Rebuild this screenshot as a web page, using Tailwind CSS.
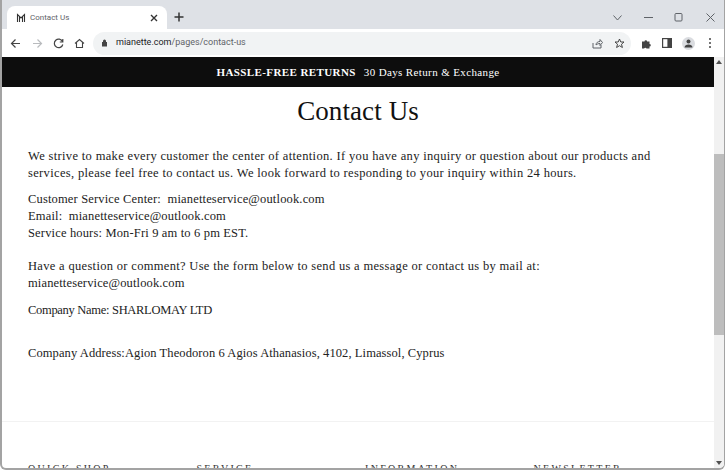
<!DOCTYPE html>
<html lang="en">
<head>
    <meta charset="UTF-8">
    <meta name="viewport" content="width=device-width, initial-scale=1.0">
    <title>Contact Us</title>
    <script src="https://cdn.jsdelivr.net/npm/@tailwindcss/browser@4"></script>
</head>
<body class="h-[470px] w-[725px] overflow-hidden bg-white font-['Liberation_Serif',serif]">
<div class="flex h-[470px] flex-col overflow-hidden rounded-b-md border-b-2 border-l-2 border-r border-[#a3a3a3]">

    <!-- tab strip -->
    <div class="flex h-[29px] shrink-0 items-end bg-[#dee1e6] pl-[5px] font-['Roboto',sans-serif]">
        <div class="flex h-[23px] w-[160px] items-center rounded-t-lg bg-white pl-[9px] pr-[9px]">
            <svg class="h-[10px] w-[10px] text-[#333]" viewBox="0 0 10 10" fill="none" stroke="currentColor" stroke-width="1.1"><path d="M1.5 9V1.5L5 5 8.5 1.5V9M3.5 9V4M6.5 9V4"/></svg>
            <span class="ml-[4px] text-[8px] text-[#5f6368]">Contact Us</span>
            <svg class="ml-auto h-[8px] w-[8px] text-[#333]" viewBox="0 0 8 8" stroke="currentColor" stroke-width="1.4"><path d="M1 1l6 6M7 1L1 7"/></svg>
        </div>
        <svg class="mb-[7px] ml-[7px] h-[10px] w-[10px] text-[#333]" viewBox="0 0 10 10" stroke="currentColor" stroke-width="1.5"><path d="M5 0.5v9M0.5 5h9"/></svg>
        <div class="mb-[7px] ml-auto flex items-center text-[#5f6368]">
            <svg class="mr-[22px] h-[6px] w-[9px]" viewBox="0 0 9 6" fill="none" stroke="currentColor"><path d="M.5 .5L4.5 5 8.5 .5"/></svg>
            <svg class="mr-[21px] h-[1px] w-[9px]" viewBox="0 0 9 1" stroke="currentColor"><path d="M0 .5h9"/></svg>
            <svg class="mr-[23px] h-[9px] w-[9px]" viewBox="0 0 9 9" fill="none" stroke="currentColor"><rect x="1" y=".5" width="7" height="7.5" rx="1"/></svg>
            <svg class="mr-[9px] h-[9px] w-[9px]" viewBox="0 0 9 9" stroke="currentColor"><path d="M.5 .5l8 8M8.5 .5l-8 8"/></svg>
        </div>
    </div>

    <!-- toolbar -->
    <div class="flex h-[28px] shrink-0 items-center bg-white pl-[8px] font-['Roboto',sans-serif] text-[#5f6368]">
        <svg class="h-[11px] w-[11px] text-[#444]" viewBox="0 0 11 11" fill="none" stroke="currentColor" stroke-width="1.2"><path d="M10 5.5H1.5M5.5 1.5l-4 4 4 4"/></svg>
        <svg class="ml-[11px] h-[11px] w-[11px] text-[#b9bbbe]" viewBox="0 0 11 11" fill="none" stroke="currentColor" stroke-width="1.2"><path d="M1 5.5h8.5M5.5 1.5l4 4-4 4"/></svg>
        <svg class="ml-[10px] h-[11px] w-[11px] text-[#444]" viewBox="0 0 11 11" fill="none" stroke="currentColor" stroke-width="1.2"><path d="M9.5 3.5A4.3 4.3 0 1 0 9.8 6.5M9.8 1v3H6.8"/></svg>
        <svg class="ml-[10px] h-[11px] w-[11px] text-[#444]" viewBox="0 0 11 11" fill="none" stroke="currentColor" stroke-width="1.1"><path d="M1 5.5L5.5 1.5 10 5.5M2.5 4.5V9.5H8.5V4.5"/></svg>
        <div class="ml-[8px] flex h-[23px] w-[538px] items-center rounded-full bg-[#f1f3f4] pl-[8px] pr-[6px]">
            <svg class="h-[8px] w-[7px] text-[#444]" viewBox="0 0 7 8" fill="currentColor"><path d="M2 3V2a1.5 1.5 0 0 1 3 0v1h1v4.5H1V3z"/></svg>
            <span class="ml-[8px] text-[9px] text-[#202124]">mianette.com<span class="text-[#5f6368]">/pages/contact-us</span></span>
            <svg class="ml-auto h-[11px] w-[11px]" viewBox="0 0 11 11" fill="none" stroke="currentColor"><path d="M1 5v5h8V7M4 7c0-2.5 2-3.5 4-3.5V1.5l2.5 3-2.5 3V5.5C6.5 5.5 5 6 4 7z"/></svg>
            <svg class="ml-[11px] h-[11px] w-[11px] text-[#444]" viewBox="0 0 11 11" fill="none" stroke="currentColor"><path d="M5.5 1l1.3 3h3.2L7.5 6.2l.9 3.3-2.9-1.8-2.9 1.8.9-3.3L1 4h3.2z"/></svg>
        </div>
        <svg class="ml-[10px] h-[11px] w-[11px] text-[#444]" viewBox="0 0 11 11" fill="currentColor"><path d="M1 3.5h2.5a1.3 1.3 0 0 1 2.6 0h2.4V6a1.3 1.3 0 0 1 0 2.6V10.5H5.5a1.3 1.3 0 0 0-2.4 0H1z"/></svg>
        <svg class="ml-[10px] h-[10px] w-[10px] text-[#444]" viewBox="0 0 10 10" fill="none" stroke="currentColor" stroke-width="1.2"><rect x=".6" y=".6" width="8.8" height="8.8"/><rect x="6" y="1" width="3" height="8" fill="currentColor"/></svg>
        <div class="ml-[10px] flex h-[13px] w-[13px] items-center justify-center rounded-full bg-[#dadce0]">
            <svg class="h-[9px] w-[9px] text-[#444]" viewBox="0 0 9 9" fill="currentColor"><circle cx="4.5" cy="2.5" r="2"/><path d="M.5 8.5c0-2 2-3 4-3s4 1 4 3z"/></svg>
        </div>
        <div class="ml-[14px] flex flex-col gap-[2px]">
            <span class="h-[2px] w-[2px] rounded-full bg-[#444]"></span>
            <span class="h-[2px] w-[2px] rounded-full bg-[#444]"></span>
            <span class="h-[2px] w-[2px] rounded-full bg-[#444]"></span>
        </div>
    </div>

    <!-- viewport -->
    <div class="flex min-h-0 flex-1">
        <main class="min-w-0 flex-1">
            <div class="flex h-[30px] items-center justify-center bg-[#0d0d0d] text-[11px] text-white">
                <span class="font-bold tracking-[0.4px]">HASSLE-FREE RETURNS</span>
                <span class="ml-[8px] tracking-[0.37px]">30 Days Return &amp; Exchange</span>
            </div>
            <h1 class="mt-[6px] text-center text-[27px] leading-[36px] tracking-[0.1px] text-[#111]">Contact Us</h1>
            <div class="pl-[26px] pr-[30px] text-[12.5px] leading-[17px] tracking-[0.16px] text-[#222]">
                <p class="mt-[19px] tracking-[0.34px]">We strive to make every customer the center of attention. If you have any inquiry or question about our products and services, please feel free to contact us. We look forward to responding to your inquiry within 24 hours.</p>
                <p class="mt-[9px]">Customer Service Center:&nbsp; mianetteservice@outlook.com<br>Email:&nbsp; mianetteservice@outlook.com<br>Service hours: Mon-Fri 9 am to 6 pm EST.</p>
                <p class="mt-[16px] tracking-[0.32px]">Have a question or comment? Use the form below to send us a message or contact us by mail at:<br><span class="tracking-[0.14px]">mianetteservice@outlook.com</span></p>
                <p class="mt-[10px] tracking-[-0.3px]">Company Name: SHARLOMAY LTD</p>
                <p class="mt-[26px] tracking-[0.09px]">Company Address:Agion Theodoron 6 Agios Athanasios, 4102, Limassol, Cyprus</p>
            </div>
            <div class="mt-[59px] border-t border-[#f2f2f2] pt-[41px]">
                <div class="grid w-[700px] grid-cols-4 pl-[26px] text-[10px] leading-[12px] tracking-[2.3px] text-[#333]">
                    <span>QUICK SHOP</span>
                    <span>SERVICE</span>
                    <span>INFORMATION</span>
                    <span>NEWSLETTER</span>
                </div>
            </div>
        </main>
        <!-- scrollbar -->
        <div class="flex w-[10px] shrink-0 flex-col bg-[#f1f1f1]">
            <div class="h-[97px] pt-[3px]">
                <div class="mx-auto h-0 w-0 border-x-[3px] border-b-[4px] border-x-transparent border-b-[#505050]"></div>
            </div>
            <div class="h-[181px] bg-[#bdbdbd]"></div>
            <div class="mt-auto pb-[3px]">
                <div class="mx-auto h-0 w-0 border-x-[3px] border-t-[4px] border-x-transparent border-t-[#505050]"></div>
            </div>
        </div>
    </div>
</div>
</body>
</html>
